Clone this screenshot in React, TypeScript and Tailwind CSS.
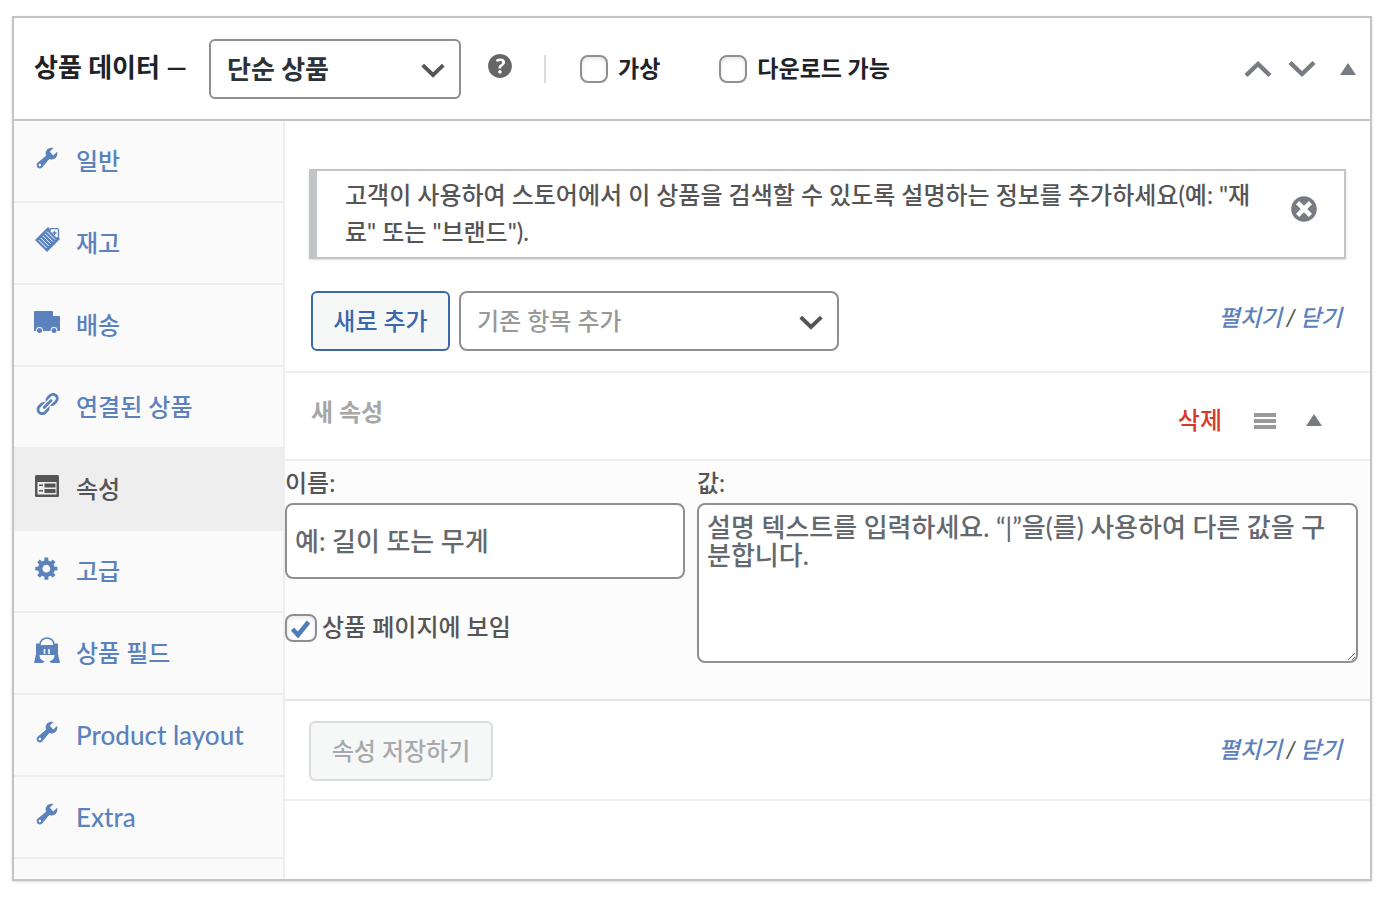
import { useState } from "react";
import type { ReactNode } from "react";
import clsx from "clsx";

const WRENCH =
  "M16.68 9.77c-1.34 1.34-3.3 1.67-4.95.99l-5.41 6.52c-.99.99-2.59.99-3.58 0s-.99-2.59 0-3.57l6.52-5.42c-.68-1.65-.35-3.61.99-4.95 1.28-1.28 3.12-1.62 4.72-1.06l-2.89 2.89 2.82 2.82 2.86-2.87c.53 1.58.18 3.39-1.08 4.65zM3.81 16.21c.4.39 1.04.39 1.43 0 .4-.4.4-1.04 0-1.43-.39-.4-1.03-.4-1.43 0-.39.39-.39 1.03 0 1.43z";
const LINK =
  "M17.74 2.76c1.68 1.69 1.68 4.41 0 6.1l-1.53 1.52c-1.12 1.12-2.7 1.47-4.14 1.09l2.62-2.61.76-.77.76-.76c.84-.84.84-2.2 0-3.04-.84-.85-2.2-.85-3.04 0l-.77.76-3.38 3.38c-.37-1.44-.02-3.02 1.1-4.14l1.52-1.53c1.69-1.68 4.42-1.68 6.1 0zM8.59 13.43l5.34-5.34c.42-.42.42-1.1 0-1.52-.44-.43-1.13-.39-1.53 0l-5.33 5.34c-.42.42-.42 1.1 0 1.52.44.43 1.13.39 1.52 0zm-.76 2.29l4.14-4.15c.38 1.44.03 3.02-1.09 4.14l-1.52 1.53c-1.69 1.68-4.41 1.68-6.1 0-1.68-1.68-1.68-4.42 0-6.1l1.53-1.52c1.12-1.12 2.7-1.47 4.14-1.1l-4.14 4.15c-.85.84-.85 2.2 0 3.05.84.84 2.2.84 3.04 0z";
const GEAR =
  "M18 12h-2.18c-.17.7-.44 1.35-.81 1.93l1.54 1.54-2.1 2.1-1.54-1.54c-.58.36-1.23.63-1.91.79V19H8v-2.18c-.68-.16-1.33-.43-1.91-.79l-1.54 1.54-2.12-2.12 1.54-1.54c-.36-.58-.63-1.23-.79-1.91H1V9.03h2.17c.16-.7.44-1.35.8-1.94L2.43 5.55l2.1-2.1 1.54 1.54c.58-.37 1.24-.64 1.93-.81V2h3v2.18c.68.16 1.33.43 1.91.79l1.54-1.54 2.12 2.12-1.54 1.54c.36.59.64 1.24.8 1.94H18V12zm-8.5 1.5c1.66 0 3-1.34 3-3s-1.34-3-3-3-3 1.34-3 3 1.34 3 3 3z";
const HELP =
  "M17 10c0-3.87-3.14-7-7-7-3.87 0-7 3.13-7 7s3.13 7 7 7c3.86 0 7-3.13 7-7zm-6.3 1.48H9.14v-.43c0-.38.08-.7.24-.98s.46-.57.88-.89c.41-.29.68-.53.81-.71.14-.18.2-.39.2-.62 0-.25-.09-.44-.28-.58-.19-.13-.45-.19-.79-.19-.58 0-1.25.19-2 .57l-.64-1.28c.87-.49 1.8-.74 2.77-.74.81 0 1.45.2 1.92.58.48.39.71.91.71 1.55 0 .43-.09.8-.29 1.11-.19.32-.57.67-1.11 1.06-.38.28-.61.49-.71.63-.1.15-.15.34-.15.57v.35zm-1.47 2.74c-.18-.17-.27-.42-.27-.73 0-.33.08-.58.26-.75s.43-.25.77-.25c.32 0 .57.09.75.26s.27.42.27.74c0 .3-.09.55-.27.72-.18.18-.43.27-.75.27-.33 0-.58-.09-.76-.26z";
const DISMISS =
  "M10 2c4.42 0 8 3.58 8 8s-3.58 8-8 8-8-3.58-8-8 3.58-8 8-8zm5 11l-3-3 3-3-2-2-3 3-3-3-2 2 3 3-3 3 2 2 3-3 3 3z";

function Dashicon({ path, className = "size-[26px]" }: { path: string; className?: string }) {
  return (
    <svg viewBox="0 0 20 20" fill="currentColor" className={className} aria-hidden="true">
      <path d={path} />
    </svg>
  );
}

function NotepadIcon() {
  return (
    <svg viewBox="0 0 26 26" className="size-[26px]" aria-hidden="true">
      <path d="M14 0L26 12 13 25 1 13z" fill="currentColor" />
      <path d="M17 2.5h7.500v7l-2 1-6-6z" fill="#fafafa" />
      <path d="M16 1.700h7a1.500 1.500 0 0 1 1.500 1.500v8" fill="none" stroke="currentColor" strokeWidth="1.300" />
      <path d="M20.500 4v4M18.500 6h4" stroke="currentColor" strokeWidth="1.300" />
      <path
        d="M4.600 13l8 8M6.700 10.900l8 8M8.800 8.800l8 8M10.900 6.700l8 8M13 4.600l8 8"
        stroke="#fafafa"
        strokeWidth="1"
      />
    </svg>
  );
}

function TruckIcon() {
  return (
    <svg viewBox="0 0 26 26" className="size-[26px]" aria-hidden="true">
      <path d="M1 2h17a1 1 0 0 1 1 1v4h6a1 1 0 0 1 1 1v13a1 1 0 0 1-1 1H0V3a1 1 0 0 1 1-1z" fill="currentColor" />
      <circle cx="5.500" cy="21.500" r="3.400" fill="#fafafa" />
      <circle cx="20" cy="21.500" r="3.400" fill="#fafafa" />
      <circle cx="5.500" cy="21.500" r="2.500" fill="currentColor" />
      <circle cx="20" cy="21.500" r="2.500" fill="currentColor" />
    </svg>
  );
}

function FormIcon() {
  return (
    <svg viewBox="0 0 26 26" className="size-[26px]" aria-hidden="true">
      <rect x="1" y="2" width="24" height="22" rx="1.500" fill="currentColor" />
      <path d="M3.500 9h19v12.500h-19z" fill="#eee" />
      <path d="M10.500 10.500h11v4h-11zM10.500 16h11v4h-11zM5 11.500h4v1.500H5zM5 17h4v1.500H5z" fill="currentColor" />
    </svg>
  );
}

function BagIcon() {
  return (
    <svg viewBox="0 0 26 26" className="size-[26px]" aria-hidden="true">
      <path d="M6 9V7.500a7 6.500 0 0 1 14 0V9" fill="none" stroke="currentColor" strokeWidth="1.500" />
      <path d="M2 6.500h3L6.500 8h13L21 6.500h3V17l2 9H0l2-9z" fill="currentColor" />
      <path d="M5.500 18h15c0 3-1.500 5.500-5 6.200l1.500 1.800H9l1.500-1.800c-3.500-.7-5-3.200-5-6.200z" fill="#fafafa" />
      <path d="M10.500 12v5M15 12v5" stroke="#fafafa" strokeWidth="1.600" />
    </svg>
  );
}

function Chevron({ up = false, className }: { up?: boolean; className?: string }) {
  return (
    <svg viewBox="0 0 28 18" className={className} fill="none" stroke="currentColor" strokeWidth="4.500" aria-hidden="true">
      <path d={up ? "M2 15.500L14 4l12 11.500" : "M2 2.500L14 14 26 2.500"} />
    </svg>
  );
}

function Triangle() {
  return (
    <svg viewBox="0 0 16 12" className="h-3 w-4" fill="currentColor" aria-hidden="true">
      <path d="M8 0l8 12H0z" />
    </svg>
  );
}

interface TabItem {
  label: string;
  icon: ReactNode;
  active?: boolean;
}

const tabs: TabItem[] = [
  { label: "일반", icon: <Dashicon path={WRENCH} /> },
  { label: "재고", icon: <NotepadIcon /> },
  { label: "배송", icon: <TruckIcon /> },
  { label: "연결된 상품", icon: <Dashicon path={LINK} /> },
  { label: "속성", icon: <FormIcon />, active: true },
  { label: "고급", icon: <Dashicon path={GEAR} /> },
  { label: "상품 필드", icon: <BagIcon /> },
  { label: "Product layout", icon: <Dashicon path={WRENCH} /> },
  { label: "Extra", icon: <Dashicon path={WRENCH} /> },
];

function Tab({ label, icon, active = false }: TabItem) {
  return (
    <li>
      <a
        href="#"
        className={clsx(
          "flex h-[82px] items-center gap-4 border-b-2 border-[#eee] pl-5",
          active ? "bg-[#eee] text-[#555]" : "text-[#5b82bd]"
        )}
      >
        <span className="pb-1.5">{icon}</span>
        <span className={/^[A-Z]/.test(label) ? "text-[26px]" : "text-2xl"}>{label}</span>
      </a>
    </li>
  );
}

interface CheckProps {
  id: string;
  label: string;
  checked?: boolean;
  boxClass: string;
  className: string;
}

function Check({ id, label, checked = false, boxClass, className }: CheckProps) {
  const [on, setOn] = useState(checked);

  return (
    <label htmlFor={id} className={clsx("flex items-center", className)}>
      <span className="relative flex">
        <input
          id={id}
          type="checkbox"
          checked={on}
          onChange={() => setOn(!on)}
          className={clsx(
            "h-7 appearance-none rounded-lg border-2 border-[#8c8f94] bg-white shadow-[inset_0_2px_4px_rgba(0,0,0,0.1)]",
            boxClass
          )}
        />
        {on && (
          <svg viewBox="0 0 20 18" className="pointer-events-none absolute top-1.5 left-1.5 h-[18px] w-5 text-[#4f7dbc]" aria-hidden="true">
            <path d="M1.500 9l5.500 6L17.500 2" fill="none" stroke="currentColor" strokeWidth="4.500" />
          </svg>
        )}
      </span>
      <span className="pb-0.5">{label}</span>
    </label>
  );
}

function ExpandClose() {
  return (
    <span className="flex items-center gap-1 pr-1 text-[23px] italic">
      <a href="#" className="text-[#5b82bd]">펼치기</a>
      <span>/</span>
      <a href="#" className="text-[#5b82bd]">닫기</a>
    </span>
  );
}

export default function App() {
  return (
    <div className="bg-white pt-4 pr-3.5 pb-4 pl-3 font-['Lato','Noto_Sans_CJK_KR',sans-serif] text-2xl font-medium text-[#555]">
      <section className="border-2 border-[#c3c4c7] bg-white shadow-sm">
        <header className="flex items-center border-b-2 border-[#c3c4c7] px-5 pt-[21px] pb-5 font-bold text-[#1d2327]">
          <h2 className="pb-1 text-[26px]">
            <label htmlFor="product-type">상품 데이터 —</label>
          </h2>
          <div className="relative ml-5.5">
            <select
              id="product-type"
              className="h-[60px] w-[252px] appearance-none rounded-md border-2 border-[#8c8f94] bg-white px-4 text-[26px] font-bold text-[#2c3338]"
            >
              <option>단순 상품</option>
            </select>
            <Chevron className="pointer-events-none absolute top-6 right-4 w-6 text-[#555]" />
          </div>
          <button type="button" aria-label="도움말" className="ml-5.5 pb-1.5 text-[#666]">
            <Dashicon path={HELP} className="size-[34px]" />
          </button>
          <span className="mr-8.5 ml-[27px] h-7 border-l-2 border-[#dcdcde]" />
          <Check id="virtual" label="가상" boxClass="w-7" className="gap-2.5 text-[23px]" />
          <Check id="downloadable" label="다운로드 가능" boxClass="w-7" className="ml-[59px] gap-2.5 text-[23px]" />
          <div className="ml-auto flex items-center gap-4 text-[#787c82]">
            <button type="button" aria-label="위로 이동">
              <Chevron up className="w-7" />
            </button>
            <button type="button" aria-label="아래로 이동">
              <Chevron className="w-7" />
            </button>
            <button type="button" aria-label="패널 접기" className="ml-2 -mr-1.5">
              <Triangle />
            </button>
          </div>
        </header>

        <div className="flex">
          <ul className="w-[271px] shrink-0 border-r-2 border-[#eee] bg-[#fafafa] pb-5">
            {tabs.map((tab) => (
              <Tab key={tab.label} {...tab} />
            ))}
          </ul>

          <div className="min-w-0 flex-1">
            <div className="border-b-2 border-[#eee] px-6 pt-12 pb-5">
              <div className="flex items-center border-2 border-l-8 border-[#c3c4c7] pt-[5px] pr-6 pb-[7px] pl-7 shadow-sm">
                <p className="flex-1 leading-[37px]">
                  고객이 사용하여 스토어에서 이 상품을 검색할 수 있도록 설명하는 정보를 추가하세요(예: "재료" 또는 "브랜드").
                </p>
                <button type="button" aria-label="알림 닫기" className="ml-4 pb-2 text-[#787c82]">
                  <Dashicon path={DISMISS} className="size-8" />
                </button>
              </div>
              <div className="mt-8 flex items-center pl-0.5">
                <button
                  type="button"
                  className="h-[60px] w-[139px] rounded-md border-2 border-[#3a68ab] bg-[#f6f7f7] text-[#3a68ab]"
                >
                  새로 추가
                </button>
                <div className="relative ml-[9px]">
                  <select
                    aria-label="기존 항목 추가"
                    className="h-[60px] w-[380px] appearance-none rounded-lg border-2 border-[#8c8f94] bg-white px-4 text-2xl text-[#999]"
                  >
                    <option>기존 항목 추가</option>
                  </select>
                  <Chevron className="pointer-events-none absolute top-6 right-4 w-6 text-[#555]" />
                </div>
                <div className="ml-auto pb-2">
                  <ExpandClose />
                </div>
              </div>
            </div>

            <div className="flex h-[88px] items-center border-b-2 border-[#eee] px-6">
              <h3 className="pb-2 pl-0.5 font-bold text-[#a7a7a7]">새 속성</h3>
              <div className="mr-6 ml-auto flex items-center pt-2">
                <a href="#" className="mr-8 text-[#d63a2a]">삭제</a>
                <button type="button" aria-label="순서 변경" className="mr-[30px] pt-0.5 text-[#999]">
                  <svg viewBox="0 0 22 16" className="h-4 w-[22px]" fill="currentColor" aria-hidden="true">
                    <path d="M0 0h22v4H0zM0 6h22v4H0zM0 12h22v4H0z" />
                  </svg>
                </button>
                <button type="button" aria-label="속성 접기" className="text-[#787c82]">
                  <Triangle />
                </button>
              </div>
            </div>

            <div className="grid grid-cols-[400px_1fr] gap-3 border-b-2 border-[#e5e5e5] bg-[#fcfcfc] pt-1 pr-3 pb-9">
              <div>
                <label htmlFor="attr-name" className="mb-0.5 block leading-9">이름:</label>
                <input
                  id="attr-name"
                  type="text"
                  placeholder="예: 길이 또는 무게"
                  className="block h-[76px] w-full rounded-lg border-2 border-[#8c8f94] bg-white px-2 text-[26px] placeholder:text-[#646970]"
                />
                <Check
                  id="attr-visible"
                  label="상품 페이지에 보임"
                  checked
                  boxClass="w-8"
                  className="mt-8 gap-[5px]"
                />
              </div>
              <div>
                <label htmlFor="attr-values" className="mb-0.5 block leading-9">값:</label>
                <textarea
                  id="attr-values"
                  placeholder="설명 텍스트를 입력하세요. “|”을(를) 사용하여 다른 값을 구분합니다."
                  className="block h-40 w-full resize rounded-lg border-2 border-[#8c8f94] bg-white py-2 pr-4 pl-2 text-[26px] leading-7 placeholder:text-[#646970]"
                />
              </div>
            </div>

            <div className="flex items-center border-b-2 border-[#eee] px-6 pt-5 pb-[18px]">
              <button
                type="button"
                disabled
                className="h-[60px] w-[184px] rounded-md border-2 border-[#dcdcde] bg-[#f6f7f7] text-[#a7aaad]"
              >
                속성 저장하기
              </button>
              <div className="ml-auto pb-1">
                <ExpandClose />
              </div>
            </div>
          </div>
        </div>
      </section>
    </div>
  );
}
